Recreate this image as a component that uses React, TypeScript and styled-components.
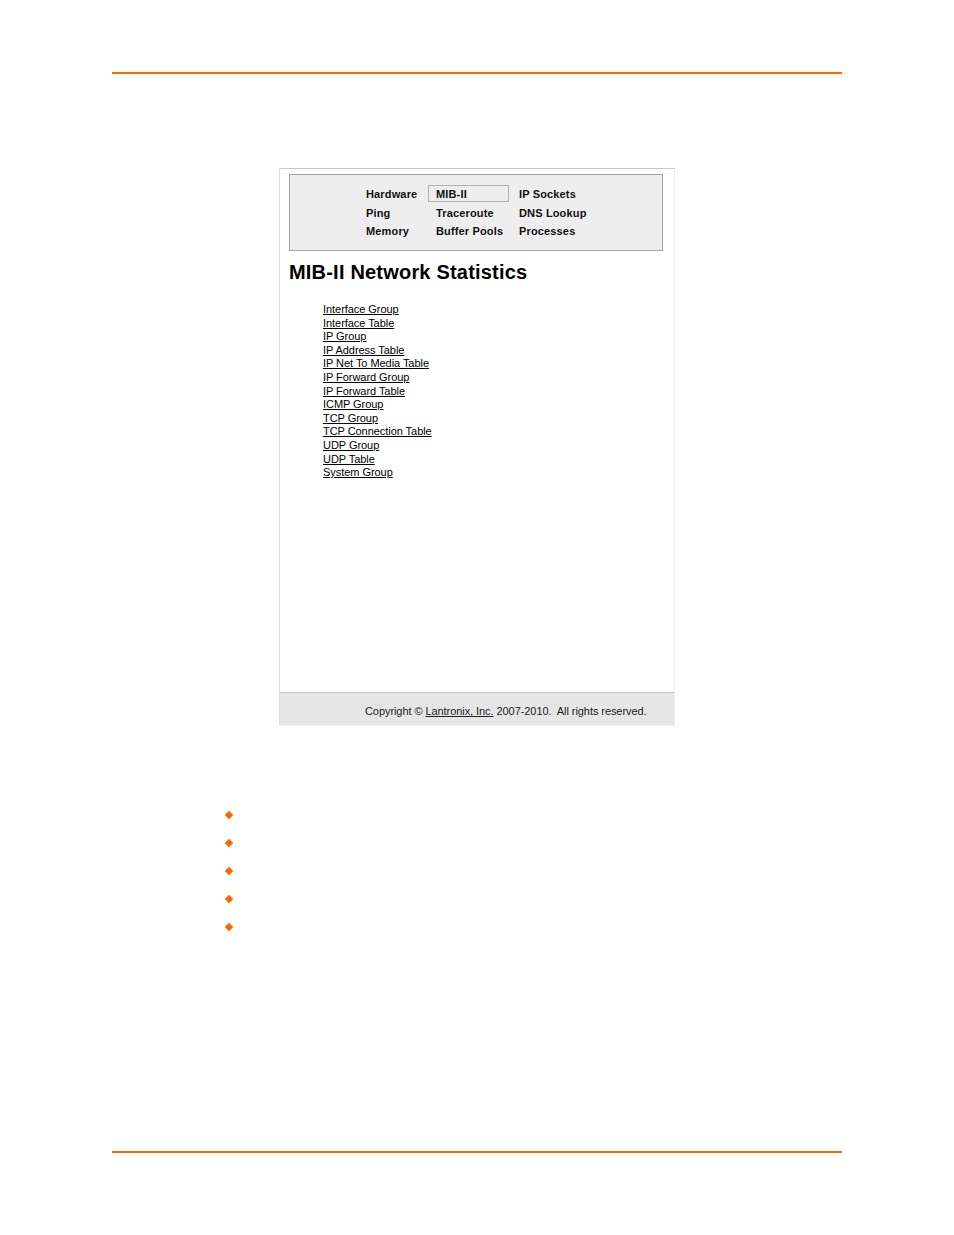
import React from "react";
import styled, { createGlobalStyle } from "styled-components";

const Global = createGlobalStyle`
  html, body { margin: 0; padding: 0; background: #fff; }
  body { font-family: "Liberation Sans", Arial, sans-serif; color: #000; }
`;

const Page = styled.div`
  width: 954px;
  height: 1235px;
  padding-top: 72px;
  box-sizing: border-box;
  display: flex;
  flex-direction: column;
  align-items: center;
`;

const Rule = styled.div<{ $gap: number }>`
  width: 730px;
  height: 2px;
  background: #ff6600;
  margin-top: ${(p) => p.$gap}px;
  flex-shrink: 0;
`;

const Frame = styled.div`
  margin-top: 94px;
  width: 396px;
  height: 558px;
  box-sizing: border-box;
  border-top: 1px solid #c6c6c6;
  border-left: 1px solid #dedede;
  border-right: 1px solid #ececec;
  border-bottom: 1px solid #ececec;
  display: flex;
  flex-direction: column;
`;

const Content = styled.div`
  padding: 5px 11px 0 9px;
  display: flex;
  flex-direction: column;
`;

const NavBox = styled.div`
  height: 77px;
  box-sizing: border-box;
  border: 1px solid #a3a3a3;
  background: #eeeeee;
  padding: 10px 0 0 76px;
  display: grid;
  grid-template-columns: 62px 91px auto;
  grid-auto-rows: 18.5px;
  align-content: start;
`;

const NavItem = styled.div<{ $active?: boolean; $pad?: boolean }>`
  font-size: 11px;
  font-weight: bold;
  letter-spacing: 0.15px;
  color: #111;
  padding-left: ${(p) => (p.$active ? 7 : p.$pad ? 8 : 0)}px;
  box-sizing: border-box;
  display: flex;
  align-items: center;
  height: ${(p) => (p.$active ? "17px" : "18.5px")};
  width: ${(p) => (p.$active ? "81px" : "auto")};
  border: ${(p) => (p.$active ? "1px solid #b0b0b0" : "none")};
`;

const Title = styled.h1`
  margin: 10px 0 0 0;
  font-size: 20px;
  font-weight: bold;
  line-height: 23px;
  letter-spacing: 0.2px;
  color: #000;
`;

const LinkList = styled.div`
  margin-top: 19px;
  padding-left: 34px;
  display: flex;
  flex-direction: column;
`;

const Link = styled.a`
  font-size: 11px;
  line-height: 13.6px;
  color: #000;
  text-decoration: underline;
  letter-spacing: -0.05px;
  align-self: flex-start;
`;

const Footer = styled.div`
  margin-top: auto;
  height: 33px;
  box-sizing: border-box;
  border-top: 1px solid #c8c8c8;
  background: #e6e6e6;
  padding-left: 85px;
  padding-top: 4px;
  display: flex;
  align-items: center;
  font-size: 11px;
  color: #222;
  letter-spacing: -0.07px;
  white-space: pre;
`;

const FooterLink = styled.a`
  color: #222;
  text-decoration: underline;
`;

const Bullets = styled.ul`
  list-style: none;
  margin: 75px 0 0 0;
  padding: 0;
  width: 954px;
`;

const Bullet = styled.li`
  height: 28px;
  display: flex;
  align-items: center;
  padding-left: 226px;
  &::before {
    content: "";
    display: block;
    width: 6px;
    height: 6px;
    background: #ff6600;
    transform: rotate(45deg);
  }
`;

const nav: [string, boolean][] = [
  ["Hardware", false],
  ["MIB-II", true],
  ["IP Sockets", false],
  ["Ping", false],
  ["Traceroute", false],
  ["DNS Lookup", false],
  ["Memory", false],
  ["Buffer Pools", false],
  ["Processes", false],
];

const links = [
  "Interface Group",
  "Interface Table",
  "IP Group",
  "IP Address Table",
  "IP Net To Media Table",
  "IP Forward Group",
  "IP Forward Table",
  "ICMP Group",
  "TCP Group",
  "TCP Connection Table",
  "UDP Group",
  "UDP Table",
  "System Group",
];

export default function App() {
  return (
    <>
      <Global />
      <Page>
        <Rule $gap={0} />
        <Frame>
          <Content>
            <NavBox>
              {nav.map(([label, active], i) => (
                <NavItem key={label} $active={active} $pad={i % 3 === 1}>
                  {label}
                </NavItem>
              ))}
            </NavBox>
            <Title>MIB-II Network Statistics</Title>
            <LinkList>
              {links.map((l) => (
                <Link key={l} href="#">
                  {l}
                </Link>
              ))}
            </LinkList>
          </Content>
          <Footer>
            Copyright © <FooterLink href="#">Lantronix, Inc.</FooterLink> 2007-2010.  All rights reserved.
          </Footer>
        </Frame>
        <Bullets>
          {[0, 1, 2, 3, 4].map((i) => (
            <Bullet key={i} />
          ))}
        </Bullets>
        <Rule $gap={210} />
      </Page>
    </>
  );
}
